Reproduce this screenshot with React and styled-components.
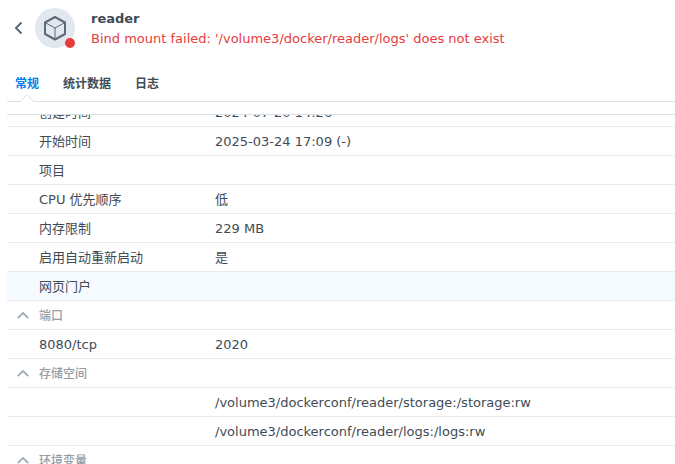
import React, { useLayoutEffect, useRef, useState } from 'react';
import styled, { createGlobalStyle, ThemeProvider } from 'styled-components';

const theme = {
  text: '#414b55',
  muted: '#969da5',
  brand: '#057feb',
  error: '#e63c3c',
  line: '#d7e1eb',
  rowLine: '#e6ecf2',
  hover: '#f5faff'
};

const GlobalStyle = createGlobalStyle`
  * {
    box-sizing: border-box;
  }
  body {
    margin: 0;
    background: #fff;
    font-family: Verdana, 'DejaVu Sans', 'Noto Sans CJK SC', sans-serif;
    font-size: 13px;
    line-height: 20px;
  }
  button {
    margin: 0;
    padding: 0;
    border: 0;
    background: none;
    font: inherit;
    color: inherit;
    cursor: pointer;
  }
`;

const Page = styled.main`
  display: flex;
  flex-direction: column;
  height: 100vh;
  padding-left: 7px;
  color: ${props => props.theme.text};
`;

const Header = styled.header`
  display: flex;
  align-items: center;
  gap: 16px;
  padding: 7px 0 0 4px;
`;

const BackButton = styled.button`
  display: flex;
  margin-right: -8px;
`;

const Avatar = styled.div`
  position: relative;
  flex: none;
  width: 40px;
  height: 40px;
  border-radius: 50%;
  background: #e1e8ef;

  svg {
    display: block;
  }
`;

const StatusDot = styled.span`
  position: absolute;
  right: 0;
  bottom: 0;
  width: 10px;
  height: 10px;
  border-radius: 50%;
  background: ${props => props.theme.error};
`;

const Heading = styled.div`
  padding-top: 2px;
`;

const Title = styled.h1`
  margin: 0;
  font-size: 13px;
  line-height: 20px;
`;

const ErrorText = styled.p`
  margin: 0;
  color: ${props => props.theme.error};
`;

const Tabs = styled.nav`
  display: flex;
  flex: none;
  gap: 24px;
  height: 34px;
  margin-top: 19px;
  padding: 0 8px;
  border-bottom: 1px solid ${props => props.theme.line};
`;

const Tab = styled.button`
  position: relative;
  display: flex;
  align-items: flex-start;
  padding-top: 6px;
  font-size: 12px;
  font-weight: bold;
  color: ${props => props.$active ? props.theme.brand : props.theme.text};
`;

const TabNotch = styled.svg`
  position: absolute;
  left: 50%;
  bottom: -1px;
  margin-left: -8px;
`;

const ScrollArea = styled.div`
  flex: 1;
  min-height: 0;
  margin-top: 12px;
  border-top: 1px solid ${props => props.theme.line};
  overflow-y: auto;
  scrollbar-width: none;
`;

const Table = styled.table`
  width: 100%;
  table-layout: fixed;
  border-spacing: 0;
`;

const Row = styled.tr`
  background: ${props => props.$highlighted ? props.theme.hover : 'transparent'};
`;

const Cell = styled.td`
  height: 29px;
  padding: 2px 0 0;
  border-bottom: 1px solid ${props => props.theme.rowLine};
  white-space: nowrap;
`;

const LabelCell = styled(Cell).attrs({ as: 'th', scope: 'row' })`
  padding-left: 32px;
  font-weight: normal;
  text-align: left;
`;

const SectionButton = styled.button`
  display: flex;
  align-items: center;
  gap: 10px;
  padding-left: 10px;
  font-size: 12px;
  font-weight: 500;
  color: ${props => props.theme.muted};

  svg {
    transform: ${props => props.$open ? 'none' : 'rotate(180deg)'};
  }
`;

const TABS = ['常规', '统计数据', '日志'];

const SECTIONS = [
  {
    rows: [
      ['创建时间', '2024-07-20 14:26'],
      ['开始时间', '2025-03-24 17:09 (-)'],
      ['项目', ''],
      ['CPU 优先顺序', '低'],
      ['内存限制', '229 MB'],
      ['启用自动重新启动', '是'],
      ['网页门户', '']
    ]
  },
  { title: '端口', rows: [['8080/tcp', '2020']] },
  {
    title: '存储空间',
    rows: [
      ['', '/volume3/dockerconf/reader/storage:/storage:rw'],
      ['', '/volume3/dockerconf/reader/logs:/logs:rw']
    ]
  },
  { title: '环境变量', rows: [] }
];

function Section ({ title, rows }) {
  const [open, setOpen] = useState(true);

  return (
    <tbody>
      {title && (
        <Row>
          <Cell colSpan={2}>
            <SectionButton $open={open} aria-expanded={open} onClick={() => setOpen(!open)}>
              <svg width='12' height='10' viewBox='0 0 12 10' fill='none' stroke='#a5adb5' strokeWidth='1.8'>
                <path d='M.8 7 6 2l5.200 5' />
              </svg>
              {title}
            </SectionButton>
          </Cell>
        </Row>
      )}
      {open && rows.map(([label, value]) => (
        <Row key={label + value} $highlighted={label === '网页门户'}>
          <LabelCell>{label}</LabelCell>
          <Cell>{value}</Cell>
        </Row>
      ))}
    </tbody>
  );
}

function App () {
  const [tab, setTab] = useState(TABS[0]);
  const list = useRef(null);

  useLayoutEffect(() => {
    list.current.scrollTop = 17;
  }, []);

  return (
    <ThemeProvider theme={theme}>
      <GlobalStyle />
      <Page>
        <Header>
          <BackButton aria-label='返回'>
            <svg width='16' height='16' viewBox='0 0 16 16' fill='none' stroke='#5f6973' strokeWidth='2'>
              <path d='M10.500 2.500 5 8l5.500 5.500' />
            </svg>
          </BackButton>
          <Avatar>
            <svg width='40' height='40' viewBox='0 0 40 40' fill='none' stroke='#5f6973' strokeLinejoin='round'>
              <path strokeWidth='2' d='M20 9l10 5.500v11.500L20 31.500 10 26V14.500z' />
              <path strokeWidth='1' d='M10 14.500l10 5.500 10-5.500M20 20v11.500' />
            </svg>
            <StatusDot />
          </Avatar>
          <Heading>
            <Title>reader</Title>
            <ErrorText>Bind mount failed: '/volume3/docker/reader/logs' does not exist</ErrorText>
          </Heading>
        </Header>
        <Tabs>
          {TABS.map(name => (
            <Tab key={name} $active={name === tab} onClick={() => setTab(name)}>
              {name}
              {name === tab && (
                <TabNotch width='16' height='8' viewBox='0 0 16 8'>
                  <path fill='#fff' stroke={theme.line} d='M1 7.500 8 .500l7 7' />
                  <path stroke='#fff' d='M2 7.500h12' />
                </TabNotch>
              )}
            </Tab>
          ))}
        </Tabs>
        <ScrollArea ref={list}>
          <Table>
            <colgroup>
              <col width='208' />
              <col />
            </colgroup>
            {SECTIONS.map((section, i) => <Section key={i} {...section} />)}
          </Table>
        </ScrollArea>
      </Page>
    </ThemeProvider>
  );
}

export default App;
